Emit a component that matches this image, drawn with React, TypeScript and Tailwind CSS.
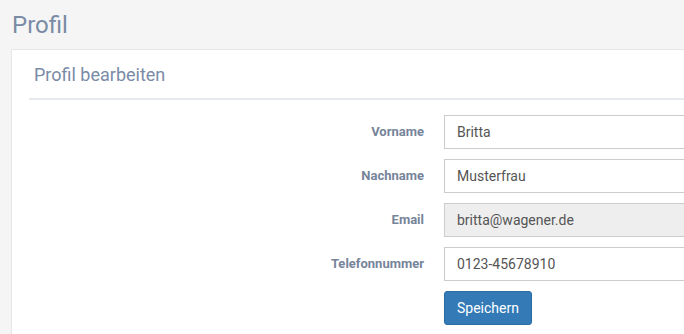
import React from "react";

const rows = [
  { label: "Vorname", value: "Britta", disabled: false },
  { label: "Nachname", value: "Musterfrau", disabled: false },
  { label: "Email", value: "britta@wagener.de", disabled: true },
  { label: "Telefonnummer", value: "0123-45678910", disabled: false },
];

export default function App() {
  return (
    <div
      className="w-[684px] h-[334px] overflow-hidden bg-[#f5f5f5] pl-[11px]"
      style={{ fontFamily: "Roboto, 'Liberation Sans', sans-serif" }}
    >
      <h1 className="text-[24px] leading-[28px] text-[#7a8ba6] pt-[11px] pl-[1px] h-[49px] font-normal">
        Profil
      </h1>
      <div className="bg-white border border-[#e6e6e6] w-[760px] h-[320px] pl-[17px]">
        <h2 className="text-[18px] leading-[20px] text-[#7a8ba6] pl-[5px] pt-[15px] h-[48px] font-normal">
          Profil bearbeiten
        </h2>
        <div className="h-[2px] bg-[#e6e9ed]" />
        <div className="flex flex-col gap-[10px] pt-[15px]">
          {rows.map((r) => (
            <div key={r.label} className="flex items-center">
              <label className="w-[415px] shrink-0 pr-[20px] text-right text-[13px] font-bold text-[#76849a]">
                {r.label}
              </label>
              <div
                className={`h-[34px] w-[300px] shrink-0 border border-[#cccccc] pl-[12px] flex items-center text-[14px] text-[#555555] ${
                  r.disabled ? "bg-[#eeeeee]" : "bg-white"
                }`}
              >
                {r.value}
              </div>
            </div>
          ))}
          <div className="flex">
            <div className="w-[415px] shrink-0" />
            <button className="h-[34px] w-[88px] shrink-0 rounded-[3px] bg-[#337ab7] border border-[#2e6da4] text-white text-[14px]">
              Speichern
            </button>
          </div>
        </div>
      </div>
    </div>
  );
}
